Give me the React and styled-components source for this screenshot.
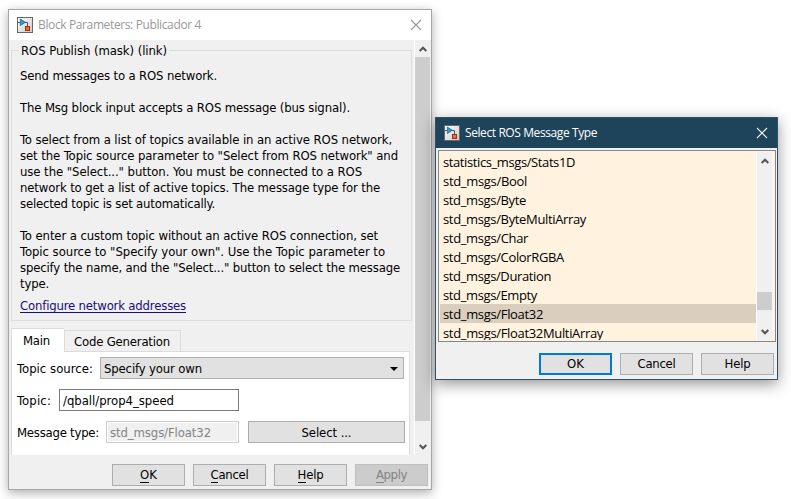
import React, { useLayoutEffect, useRef } from 'react';
import styled, { createGlobalStyle, css } from 'styled-components';

const GlobalStyle = createGlobalStyle`
  *, *::before, *::after { box-sizing: border-box; }
  body { margin: 0; background: #fff; overflow: hidden; }
`;

const tahoma = '"DejaVu Sans Condensed", "DejaVu Sans", sans-serif';
const segoe = '"Open Sans", "Noto Sans", sans-serif';

const Desktop = styled.main`
  position: relative;
  width: 791px;
  height: 499px;
  overflow: hidden;
  background: #fff;
  color: #000;
  font: 13px/16px ${tahoma};
`;

const Window = styled.section`
  position: absolute;
  display: flex;
  flex-direction: column;
  background: #f0f0f0;
`;

const ParametersWindow = styled(Window)`
  left: 8px;
  top: 9px;
  width: 424px;
  height: 481px;
  border: 1px solid #a6a6a6;
  box-shadow: 0 3px 10px rgba(0, 0, 0, 0.32);
`;

const MessageWindow = styled(Window)`
  left: 435px;
  top: 117px;
  width: 343px;
  height: 263px;
  border: 1px solid #2f5066;
  box-shadow: 0 4px 14px rgba(0, 0, 0, 0.42);
`;

const TitleBar = styled.header`
  display: flex;
  align-items: center;
  flex: none;
  height: 30px;
  padding: 0 9px 0 8px;
  gap: 5px;
  background: ${(p) => (p.$active ? '#1d445a' : '#fff')};
  color: ${(p) => (p.$active ? '#fff' : '#999')};
  font: 12px/18px ${segoe};
  > :last-child { margin-left: auto; }
`;

const FitText = styled.span`
  display: inline-block;
  white-space: pre;
`;

/* Tracks a run of text so that it fills the given width. */
function Fit({ w, children, ...rest }) {
  const ref = useRef(null);
  useLayoutEffect(() => {
    const el = ref.current;
    el.style.letterSpacing = '0px';
    const natural = el.getBoundingClientRect().width;
    el.style.letterSpacing = `${(w - natural) / el.textContent.length}px`;
  }, [w]);
  return <FitText ref={ref} {...rest}>{children}</FitText>;
}

const BlockIcon = () => (
  <svg width="16" height="16" viewBox="0 0 16 16">
    <defs>
      <linearGradient id="plate" x1="0" y1="0" x2="1" y2="1">
        <stop offset="0" stopColor="#fff" />
        <stop offset="1" stopColor="#c9c9c9" />
      </linearGradient>
    </defs>
    <rect x=".5" y=".5" width="15" height="15" fill="url(#plate)" stroke="#666" />
    <path d="M1 5.500h2M7 5.500h3.500v4" fill="none" stroke="#555" />
    <path d="M3.300 2v6.600l5-3.300z" fill="#2d9bd2" stroke="#176b9e" strokeWidth=".8" />
    <rect x="8.500" y="9.500" width="4" height="4" fill="#ed6a3c" stroke="#a82a10" />
  </svg>
);

const CloseIcon = () => (
  <svg width="12" height="12" viewBox="0 0 12 12" fill="none" stroke="currentColor">
    <path d="M1 1l10 10M11 1L1 11" strokeWidth="1.100" />
  </svg>
);

const Chevron = ({ down }) => (
  <svg width="8" height="6" viewBox="0 0 8 6" fill="none" stroke="#555" strokeWidth="2">
    <path d={down ? 'M.7 1L4 4.300 7.300 1' : 'M.7 5L4 1.700 7.300 5'} />
  </svg>
);

const ScrollBar = styled.div`
  display: flex;
  flex-direction: column;
  align-items: center;
  flex: none;
  width: 16px;
  border-left: 1px solid #fff;
  background: #f0f0f0;
`;

const ScrollArrow = styled.div`
  display: grid;
  place-items: center;
  flex: none;
  width: 15px;
  height: 17px;
`;

const ScrollThumb = styled.div`
  flex: none;
  width: 15px;
  height: ${(p) => p.$size}px;
  margin-top: ${(p) => p.$offset}px;
  margin-bottom: auto;
  background: #cdcdcd;
`;

const ScrollView = styled.div`
  display: flex;
  justify-content: space-between;
  height: 415px;
  padding-right: 1px;
`;

const ScrollContent = styled.div`
  width: 405px;
  padding: 1px 3px 0 2px;
`;

const Group = styled.fieldset`
  width: 401px;
  height: 280px;
  margin: 0;
  padding: 9px 0 0 8px;
  border: 1px solid #dcdcdc;
`;

const Legend = styled.legend`
  height: 18px;
  margin-left: -1px;
  padding: 0 2px;
  line-height: 20px;
`;

const Description = styled.div`
  display: flex;
  flex-direction: column;
  align-items: flex-start;
`;

const Line = styled(Fit)`
  height: 16px;
`;

const Link = styled.a`
  display: inline-flex;
  height: 15px;
  margin-top: 6px;
  color: #1a0d7c;
  border-bottom: 1px solid #1a0d7c;
`;

const Tabs = styled.div`
  display: flex;
  align-items: flex-end;
  height: 23px;
  margin-top: 7px;
`;

const Tab = styled.div`
  display: flex;
  width: ${(p) => p.$w}px;
  border: 1px solid #dcdcdc;
  border-bottom: 0;
  ${(p) =>
    p.$active
      ? css`
          position: relative;
          height: 24px;
          margin-bottom: -1px;
          padding: 4px 0 0 11px;
          border-right: 0;
          background: #fff;
        `
      : css`
          height: 21px;
          padding: 3px 0 0 9px;
        `}
`;

const TabPane = styled.div`
  display: flex;
  flex-direction: column;
  width: 399px;
  height: 104px;
  padding: 5px 4px 0 5px;
  gap: 10px;
  border: 1px solid #dcdcdc;
  border-bottom: 0;
  background: #fff;
`;

const FieldRow = styled.div`
  display: flex;
  align-items: center;
  height: 22px;
`;

const Label = styled.label`
  flex: none;
  display: flex;
  width: ${(p) => p.$w}px;
  padding-top: 2px;
`;

const Box = styled.div`
  display: flex;
  align-items: center;
  width: ${(p) => p.$w}px;
  height: 22px;
  padding: 2px 5px 0 3px;
`;

const Select = styled(Box)`
  justify-content: space-between;
  border: 1px solid #adadad;
  background: #e1e1e1;
`;

const Input = styled(Box)`
  border: 1px solid ${(p) => (p.$disabled ? '#ccc' : '#7a7a7a')};
  background: ${(p) => (p.$disabled ? '#f0f0f0' : '#fff')};
  color: ${(p) => (p.$disabled ? '#838383' : '#000')};
  ${(p) => p.$disabled && 'box-shadow: inset 0 0 0 1px #fff;'}
`;

const Button = styled.button`
  display: flex;
  align-items: center;
  justify-content: center;
  flex: none;
  width: ${(p) => p.$w || 73}px;
  height: 22px;
  margin: 0;
  padding: 0;
  border: ${(p) => (p.$primary ? '2px solid #0078d7' : '1px solid #adadad')};
  background: #e1e1e1;
  color: #000;
  font: 13px/16px ${tahoma};
  &:disabled { background: #ccc; border-color: #bfbfbf; color: #838383; }
`;

const SelectButton = styled(Button)`
  margin-left: 9px;
  padding-top: 2px;
`;

const Mnemonic = styled.span`
  display: inline-block;
  height: 16px;
  border-bottom: 1px solid currentColor;
`;

const Footer = styled.footer`
  display: flex;
  justify-content: flex-end;
  gap: 8px;
  padding: ${(p) => p.$top}px 3px 0 0;
`;

const ListFrame = styled.div`
  display: flex;
  width: 338px;
  height: 192px;
  margin: 2px 0 0 2px;
  padding: 1px 3px 1px 1px;
  border: 1px solid #828790;
  background: #fff3e0;
`;

const List = styled.ul`
  flex: 1;
  margin: 0;
  padding: 0;
  overflow: hidden;
  list-style: none;
  font: 13px/21px ${segoe};
`;

const Item = styled.li`
  height: 19px;
  padding-left: 3px;
  background: ${(p) => (p.$selected ? '#dacfbe' : 'transparent')};
`;

const description = [
  ['Send messages to a ROS network.', 197],
  null,
  ['The Msg block input accepts a ROS message (bus signal).', 330],
  null,
  ['To select from a list of topics available in an active ROS network,', 372],
  ['set the Topic source parameter to "Select from ROS network" and', 378],
  ['use the "Select..." button. You must be connected to a ROS', 342],
  ['network to get a list of active topics. The message type for the', 360],
  ['selected topic is set automatically.', 195],
  null,
  ['To enter a custom topic without an active ROS connection, set', 358],
  ['Topic source to "Specify your own". Use the Topic parameter to', 365],
  ['specify the name, and the "Select..." button to select the message', 380],
  ['type.', 29],
];

const messageTypes = [
  ['statistics_msgs/Stats1D', 132],
  ['std_msgs/Bool', 84],
  ['std_msgs/Byte', 83],
  ['std_msgs/ByteMultiArray', 143],
  ['std_msgs/Char', 85],
  ['std_msgs/ColorRGBA', 121],
  ['std_msgs/Duration', 108],
  ['std_msgs/Empty', 94],
  ['std_msgs/Float32', 100],
  ['std_msgs/Float32MultiArray', 160],
];

const actions = [
  ['OK', 17],
  ['Cancel', 38],
  ['Help', 26],
  ['Apply', 31],
];

export default function App() {
  return (
    <>
      <GlobalStyle />
      <Desktop>
        <ParametersWindow>
          <TitleBar>
            <BlockIcon />
            <Fit w={163}>Block Parameters: Publicador 4</Fit>
            <CloseIcon />
          </TitleBar>
          <ScrollView>
            <ScrollContent>
              <Group>
                <Legend><Fit w={146}>ROS Publish (mask) (link)</Fit></Legend>
                <Description>
                  {description.map((line, i) => (
                    <Line key={i} w={line ? line[1] : 0}>{line ? line[0] : ' '}</Line>
                  ))}
                  <Link><Fit w={166}>Configure network addresses</Fit></Link>
                </Description>
              </Group>
              <Tabs>
                <Tab $active $w={53}><Fit w={27}>Main</Fit></Tab>
                <Tab $w={117}><Fit w={96}>Code Generation</Fit></Tab>
              </Tabs>
              <TabPane>
                <FieldRow>
                  <Label $w={83}><Fit w={76}>Topic source:</Fit></Label>
                  <Select $w={304}>
                    <Fit w={98}>Specify your own</Fit>
                    <svg width="8" height="4" viewBox="0 0 8 4"><path d="M0 0h8L4 4z" /></svg>
                  </Select>
                </FieldRow>
                <FieldRow>
                  <Label $w={42}><Fit w={34}>Topic:</Fit></Label>
                  <Input $w={180}><Fit w={111}>/qball/prop4_speed</Fit></Input>
                </FieldRow>
                <FieldRow>
                  <Label $w={89}><Fit w={82}>Message type:</Fit></Label>
                  <Input $w={133} $disabled><Fit w={101}>std_msgs/Float32</Fit></Input>
                  <SelectButton $w={157}><Fit w={50}>Select ...</Fit></SelectButton>
                </FieldRow>
              </TabPane>
            </ScrollContent>
            <ScrollBar>
              <ScrollArrow><Chevron /></ScrollArrow>
              <ScrollThumb $offset={0} $size={364} />
              <ScrollArrow><Chevron down /></ScrollArrow>
            </ScrollBar>
          </ScrollView>
          <Footer $top={9}>
            {actions.map(([label, w]) => (
              <Button key={label} disabled={label === 'Apply'}>
                <Fit w={w}><Mnemonic>{label[0]}</Mnemonic>{label.slice(1)}</Fit>
              </Button>
            ))}
          </Footer>
        </ParametersWindow>

        <MessageWindow>
          <TitleBar $active>
            <BlockIcon />
            <Fit w={132}>Select ROS Message Type</Fit>
            <CloseIcon />
          </TitleBar>
          <ListFrame>
            <List>
              {messageTypes.map(([name, w]) => (
                <Item key={name} $selected={name === 'std_msgs/Float32'}>
                  <Fit w={w}>{name}</Fit>
                </Item>
              ))}
            </List>
            <ScrollBar>
              <ScrollArrow><Chevron /></ScrollArrow>
              <ScrollThumb $offset={123} $size={18} />
              <ScrollArrow><Chevron down /></ScrollArrow>
            </ScrollBar>
          </ListFrame>
          <Footer $top={11}>
            {actions.slice(0, 3).map(([label, w]) => (
              <Button key={label} $primary={label === 'OK'}><Fit w={w}>{label}</Fit></Button>
            ))}
          </Footer>
        </MessageWindow>
      </Desktop>
    </>
  );
}
